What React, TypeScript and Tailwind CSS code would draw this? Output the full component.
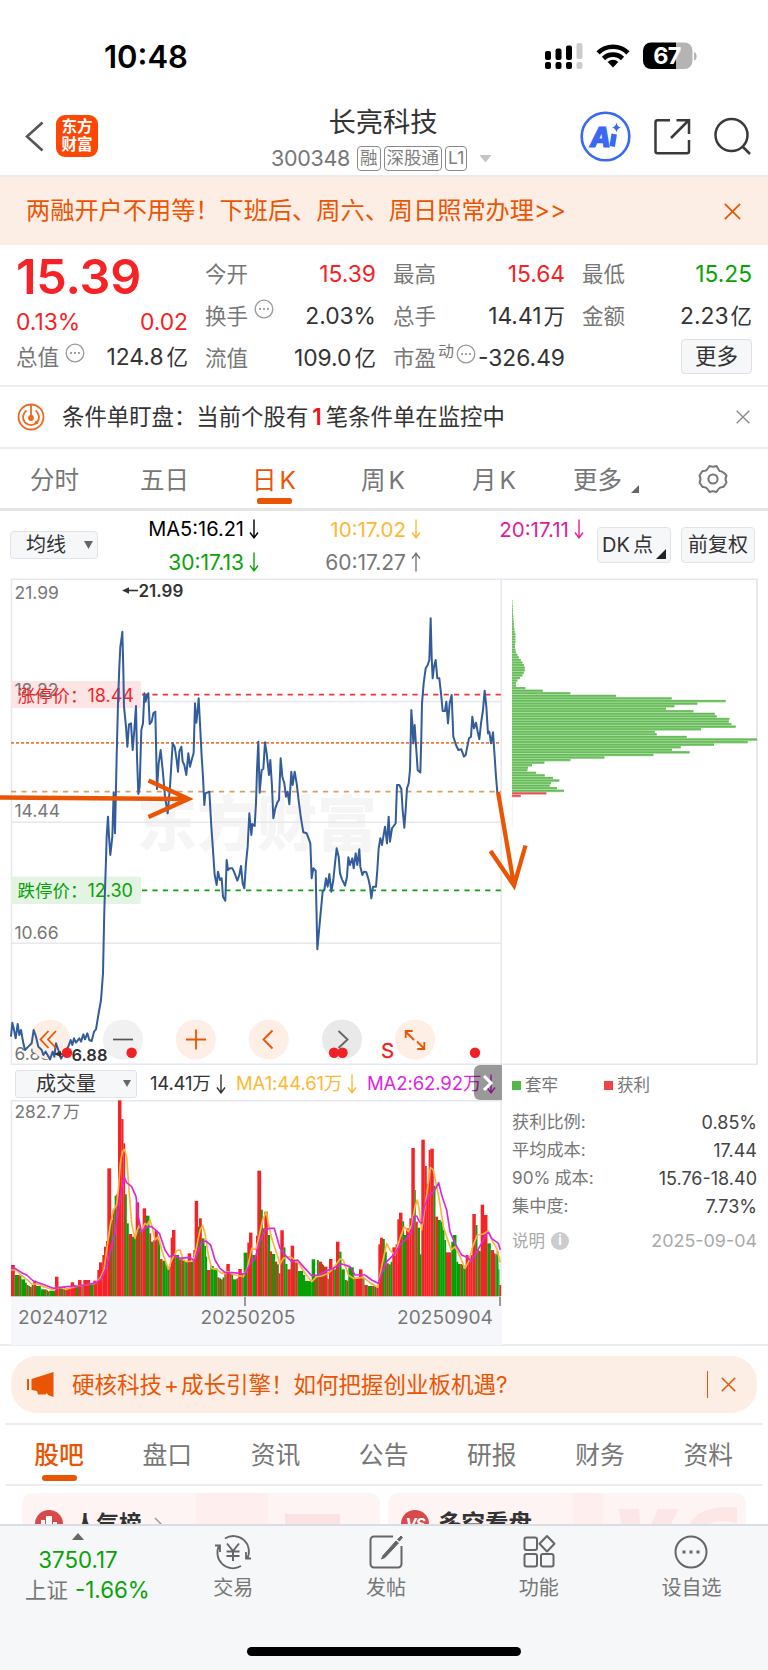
import type { ReactNode } from 'react';

// Series are stored in thirds of a pixel, relative to the left/top edge of each chart.
const pricePoints =
  '33,1400 37,1358 41,1375 47,1405 53,1362 58,1395 63,1380 70,1420 75,1440 85,1430 95,1420 101,1380 108,1400 115,1430 125,1440 130,1455 137,1445 150,1468 158,1445 163,1460 168,1420 175,1440 183,1466 195,1445 205,1430 212,1410 217,1425 222,1405 228,1418 238,1405 243,1415 250,1393 255,1408 262,1390 268,1410 275,1413 282,1385 288,1378 295,1335 303,1290 309,1210 313,1020 318,870 320,800 324,740 327,800 331,855 337,800 341,667 345,790 350,560 354,400 358,290 361,230 364,210 367,185 370,300 372,410 378,470 382,530 387,463 393,460 398,540 403,480 408,408 411,560 415,672 419,650 424,480 429,460 433,370 437,395 441,375 445,370 449,462 455,455 460,430 466,425 468,520 471,657 476,580 482,540 489,610 495,680 503,730 510,650 518,520 524,530 530,570 534,605 538,545 544,530 548,575 553,585 559,615 565,550 570,590 575,570 581,548 585,400 589,458 593,420 596,385 600,460 605,560 609,620 613,705 616,670 628,665 634,770 639,840 644,915 650,945 654,905 660,930 665,925 669,980 676,992 680,870 684,900 690,895 697,895 702,905 712,932 718,915 723,888 728,940 733,955 738,880 743,830 748,730 754,795 757,762 764,768 768,700 771,600 775,515 779,668 785,600 790,597 795,517 800,550 807,615 811,570 816,650 820,745 826,715 832,697 837,690 842,565 847,620 853,640 858,680 863,665 868,703 874,605 878,645 884,605 890,640 897,700 903,745 910,787 920,790 925,803 931,820 935,925 940,895 947,902 949,1000 952,1138 960,1050 968,965 973,960 978,925 983,950 988,912 994,965 1000,930 1005,880 1010,835 1016,860 1020,910 1026,928 1035,947 1041,920 1045,862 1050,885 1057,865 1061,895 1067,850 1072,885 1078,838 1081,890 1087,915 1092,905 1099,907 1106,930 1110,950 1114,985 1119,950 1128,950 1132,900 1136,835 1141,805 1146,825 1155,770 1161,820 1166,740 1170,815 1176,775 1181,768 1187,760 1191,645 1198,645 1204,657 1208,720 1213,773 1217,720 1221,655 1226,640 1230,600 1234,420 1237,460 1240,520 1244,465 1249,540 1253,600 1261,608 1264,500 1266,400 1271,340 1277,295 1283,285 1288,270 1292,145 1295,260 1298,325 1302,290 1307,270 1312,325 1318,325 1323,370 1328,423 1335,423 1339,395 1344,460 1349,400 1355,375 1360,500 1368,525 1375,540 1384,538 1392,560 1397,555 1402,530 1407,505 1413,500 1417,440 1422,475 1428,458 1433,485 1438,508 1443,460 1449,420 1454,362 1459,410 1464,490 1468,485 1473,520 1479,487 1484,560 1488,620 1492,668';

const volumeMa1 =
  '33,630 50,630 62,645 80,658 95,672 115,672 130,680 155,688 180,682 200,688 225,680 255,675 285,670 300,655 312,630 320,570 330,500 340,450 350,435 355,390 361,310 367,275 373,268 380,290 387,390 395,490 405,535 412,510 418,495 425,510 435,490 442,495 450,480 456,500 465,540 475,530 485,570 505,628 515,600 530,572 540,570 550,600 560,605 580,603 590,560 600,510 608,497 615,520 625,585 635,625 650,628 665,640 685,635 705,645 730,650 742,625 755,565 767,568 775,540 788,480 799,455 805,490 815,535 830,580 840,612 850,595 870,590 885,600 900,615 915,640 935,665 950,650 965,648 985,640 1000,625 1020,597 1030,600 1045,645 1060,655 1090,652 1110,668 1133,682 1145,620 1160,550 1170,570 1185,585 1200,535 1213,500 1225,515 1235,495 1245,440 1252,420 1258,450 1265,510 1275,440 1285,370 1291,322 1300,330 1308,370 1318,420 1330,500 1340,530 1353,570 1365,560 1380,590 1395,625 1408,600 1418,560 1432,525 1450,522 1465,513 1478,545 1490,565 1501,608';

const volumeMa2 =
  '33,622 45,625 65,638 80,645 100,663 120,670 160,685 200,680 240,678 290,668 305,655 320,620 330,580 345,520 355,450 365,385 373,352 380,368 395,380 408,410 415,470 424,515 440,500 455,500 478,520 495,570 508,590 520,585 540,595 570,592 583,603 595,570 605,548 617,543 632,555 645,600 660,625 675,637 700,638 735,642 750,612 765,595 780,545 795,510 810,505 823,505 830,530 840,565 860,590 875,605 893,600 910,620 935,647 955,645 980,632 1000,625 1025,612 1050,620 1065,645 1095,645 1115,660 1135,670 1145,640 1160,605 1185,580 1200,555 1220,535 1235,515 1242,470 1250,468 1258,485 1265,490 1273,440 1285,410 1300,395 1310,380 1316,368 1325,405 1340,450 1350,515 1365,550 1385,585 1400,592 1415,603 1430,575 1445,550 1460,520 1466,518 1475,535 1495,550 1501,570';

// x, top, colour: r = up, g = down, m = alternating days
const volumeRuns =
  '33 615 r,44 645 g,54 645 m,64 658 g,75 668 g,80 675 m,100 662 r,108 678 g,122 688 g,135 688 m,148 692 g,165 650 r,175 680 m,196 685 r,212 667 r,222 675 m,234 660 r,244 672 m,250 660 r,270 672 g,280 662 r,292 630 r,297 607 r,307 585 r,312 560 r,318 543 r,322 325 r,333 480 g,338 450 r,344 407 g,349 402 r,354 121 r,364 177 r,370 250 r,375 403 g,380 490 g,386 522 r,396 530 g,407 427 r,417 495 g,422 515 r,428 445 r,438 467 g,448 520 r,453 545 g,460 540 r,464 512 r,473 540 g,480 597 r,487 602 g,497 615 g,503 628 g,508 620 r,512 533 r,516 510 r,526 585 g,537 598 r,545 590 g,549 600 m,557 605 g,563 580 r,573 603 g,580 570 r,584 423 r,594 500 g,597 475 r,605 535 g,613 558 g,618 590 g,621 630 r,631 618 g,641 625 g,652 652 m,668 652 g,673 640 m,679 612 r,689 640 m,699 658 g,710 655 r,715 627 r,725 640 m,731 578 g,742 548 r,747 518 r,757 585 g,768 527 r,772 332 r,783 449 g,788 505 r,793 455 r,803 525 g,810 574 r,816 582 g,825 605 r,831 613 g,836 640 r,841 511 r,851 562 g,856 612 g,862 628 r,872 557 r,882 605 m,887 605 r,893 633 g,909 645 g,915 663 g,935 598 g,945 650 r,951 600 g,956 605 r,966 612 m,972 620 r,982 655 m,987 597 r,997 625 m,1008 545 r,1018 575 g,1024 628 g,1034 660 g,1040 662 r,1045 622 g,1061 650 m,1066 655 r,1077 628 r,1087 650 m,1093 675 r,1103 678 g,1118 678 m,1135 553 r,1140 533 r,1149 537 g,1154 575 g,1160 610 m,1172 605 g,1177 562 r,1187 553 r,1192 478 r,1197 458 r,1207 484 g,1212 525 g,1218 505 r,1228 475 r,1234 264 r,1244 390 g,1247 485 r,1253 503 g,1260 583 g,1264 239 r,1274 318 r,1280 372 r,1286 270 r,1291 266 r,1301 377 g,1306 470 r,1314 480 g,1322 485 g,1328 510 g,1333 540 g,1338 577 r,1354 545 g,1359 525 g,1369 605 g,1374 612 g,1382 612 m,1390 625 g,1397 585 r,1405 590 r,1412 585 r,1417 462 r,1427 495 g,1432 570 m,1442 434 r,1452 465 r,1462 550 g,1472 570 r,1482 580 m,1490 573 g,1495 628 g,1498 675 r';

const chips = [
  1, 1, 2, 2, 3, 3, 4, 4, 5, 6, 6, 7, 8, 10, 10, 10, 10, 9, 9, 10, 12, 16, 20, 26, 31, 36, 38, 38, 35, 31, 24, 16, 12, 12,
  40, 92, 175, 312, 479, 641, 556, 487, 462, 544, 608, 614, 652, 650, 658, 671, 567, 428, 434, 524, 735, 707, 606, 506,
  480, 533, 424, 277, 175, 97, 60, 48, 46, 72, 98, 123, 142, 117, 113, 135, 156, 103, 26,
];

const VOLUME_BASE = 709;

const volumeBars = volumeRuns.split(',').flatMap((run, i, all) => {
  const [x, top, kind] = run.split(' ');
  const end = i + 1 < all.length ? Number(all[i + 1].split(' ')[0]) : 1503;
  const start = Number(x);
  if (kind !== 'm') return [{ x: start, w: end - start, y: Number(top), up: kind === 'r' }];
  const n = Math.max(2, Math.round((end - start) / 5.2));
  const w = (end - start) / n;
  return Array.from({ length: n }, (_, k) => ({ x: start + k * w, w, y: Number(top) + (k % 3) * 3, up: k % 2 === 0 }));
});

const quoteRows = [
  [
    { label: '今开', value: '15.39', color: 'text-[#f52226]' },
    { label: '最高', value: '15.64', color: 'text-[#f52226]' },
    { label: '最低', value: '15.25', color: 'text-[#09a209]' },
  ],
  [
    { label: '换手', value: '2.03%', color: 'text-[#333]', more: true },
    { label: '总手', value: '14.41', unit: '万', color: 'text-[#333]' },
    { label: '金额', value: '2.23', unit: '亿', color: 'text-[#333]' },
  ],
];

const infoTabs = ['股吧', '盘口', '资讯', '公告', '研报', '财务', '资料'];

const chipStats = [
  { label: '获利比例:', value: '0.85%' },
  { label: '平均成本:', value: '17.44' },
  { prefix: '90%', label: '成本:', value: '15.76-18.40' },
  { label: '集中度:', value: '7.73%' },
];

function Cross({ className }: { className: string }) {
  return (
    <svg className={className} viewBox="0 0 16 16" fill="none" stroke="currentColor" strokeWidth="1.6">
      <path d="M0.8 0.8 15.2 15.2M15.2 0.8 0.8 15.2" />
    </svg>
  );
}

function Dots() {
  return (
    <svg className="h-[20px] w-[20px] shrink-0 text-[#999]" viewBox="0 0 20 20" fill="none" stroke="currentColor" strokeWidth="1.3">
      <circle cx="10" cy="10" r="8.8" />
      <path d="M5.2 10h1.8M9.1 10h1.8M13 10h1.8" strokeWidth="1.8" />
    </svg>
  );
}

function Arrow({ up }: { up?: boolean }) {
  return (
    <svg className="ml-[5px] h-[20px] w-[10px]" viewBox="0 0 10 20" fill="none" stroke="currentColor" strokeWidth="1.4">
      <path d={up ? 'M5 19.5V1.5M1 6.5 5 1.2 9 6.5' : 'M5 .5v18M1 13.5l4 5.3 4-5.3'} />
    </svg>
  );
}

function StatusBar() {
  return (
    <div className="flex h-[100px] shrink-0 items-start">
      <span className="ml-[104px] mt-[39px] w-[90px] text-[31px] font-semibold leading-[36px] text-black">10:48</span>
      <svg className="ml-[350px] mt-[42px] h-[28px] w-[154px]" viewBox="544 42 154 28">
        <g fill="#000">
          <rect x="545" y="51" width="6" height="9" rx="2" />
          <rect x="555.5" y="48.500" width="6" height="11.500" rx="2" />
          <rect x="566" y="45.500" width="6" height="14.500" rx="2" />
          <rect x="545" y="62" width="6" height="7" rx="2" />
          <rect x="555.5" y="62" width="6" height="7" rx="2" />
          <rect x="566" y="62" width="6" height="7" rx="2" />
        </g>
        <g fill="#ccc">
          <rect x="576.5" y="43" width="6" height="16" rx="2" />
          <rect x="576.5" y="62" width="6" height="7" rx="2" />
        </g>
        <g fill="none" stroke="#000" strokeWidth="4.600">
          <path d="M598 52.800A21.500 21.500 0 0 1 628 52.800" />
          <path d="M603.500 58.500A13.700 13.700 0 0 1 622.500 58.500" />
        </g>
        <path d="M613 67.500 607.700 62A7.500 7.500 0 0 1 618.300 62Z" fill="#000" />
        <path d="M651 42.500h25v26.500h-25a8 8 0 0 1-8-8v-10.500a8 8 0 0 1 8-8z" fill="#000" />
        <path d="M676 42.500h8.500a8 8 0 0 1 8 8v10.500a8 8 0 0 1-8 8H676z" fill="#b4b4b4" />
        <path d="M694 52c3.500 1 3.500 7.500 0 8.500z" fill="#b4b4b4" />
        <text x="667" y="64.300" textAnchor="middle" fill="#fff" fontSize="23.500" fontWeight="700" letterSpacing="-0.8">
          67
        </text>
      </svg>
    </div>
  );
}

function Tag({ children }: { children: ReactNode }) {
  return (
    <span className="flex h-[25px] items-center rounded-[4px] border-[1.5px] border-[#8a8a8a] px-[2px] text-[17.5px] text-[#808080]">
      {children}
    </span>
  );
}

function Header() {
  return (
    <header className="flex h-[75px] shrink-0 items-start">
      <svg className="ml-[24px] mt-[21px] h-[31px] w-[21px]" viewBox="0 0 21 31" fill="none" stroke="#555" strokeWidth="2.600">
        <path d="M18.500 1.500 3 15.500l15.500 14" />
      </svg>
      <div className="ml-[11px] mt-[15px] h-[42px] w-[42px] rounded-[9px] bg-[#fd4705] pt-[3px] text-center text-[15.500px] font-bold leading-[18px] text-white">
        东方
        <br />
        财富
      </div>
      <div className="ml-[152px] flex w-[254px] flex-col items-center pt-[5px]">
        <h1 className="ml-[12px] text-[27.300px] leading-[36px] text-[#333]">长亮科技</h1>
        <div className="mt-[5px] flex w-full items-center gap-[3px] pl-[21px]">
          <span className="mr-[4px] text-[21.500px] leading-[25px] tracking-[-0.3px] text-[#777]">300348</span>
          <Tag>融</Tag>
          <Tag>深股通</Tag>
          <Tag>L1</Tag>
        </div>
      </div>
      <svg className="mt-[54px] -ml-[25px] h-[9px] w-[13px]" viewBox="0 0 13 9">
        <path d="M.5 1h12L6.500 8.500z" fill="#c4c4c4" />
      </svg>
      <svg className="ml-[87px] mt-[10px] h-[54px] w-[176px]" viewBox="579 110 176 54" fill="none">
        <circle cx="605.500" cy="136.500" r="23.800" stroke="#3a68f4" strokeWidth="2.600" />
        <text x="590" y="147" fill="#3a68f4" stroke="#3a68f4" strokeWidth="1.200" fontSize="27" fontWeight="800" fontStyle="italic" textLength="18">
          A
        </text>
        <path d="m614.200 134-2 12.500" stroke="#3a68f4" strokeWidth="5.500" />
        <path d="M616.500 122.500q.7 4.300 4.500 5-3.800.8-4.500 5-.8-4.200-4.500-5 3.700-.7 4.500-5z" fill="#3a68f4" />
        <g stroke="#3a3a3a" strokeWidth="2.500">
          <path d="M670 120.200h-12.500a2 2 0 0 0-2 2v29a2 2 0 0 0 2 2h29.500a2 2 0 0 0 2-2V140M689 134v-13.800h-12.500M688.500 120.500l-17.500 17.500" />
          <circle cx="731.500" cy="135" r="16" />
          <path d="m742.500 146.500 7.500 7.500" />
        </g>
      </svg>
    </header>
  );
}

function Quote() {
  return (
    <section className="flex h-[142px] shrink-0 border-b-2 border-[#ebedf0] pl-[16px] pr-[15px] text-[21.500px]">
      <div className="w-[172px]">
        <div className="mt-[8px] h-[48px] text-[48.500px] font-semibold leading-[48px] tracking-[-0.2px] text-[#f52226]">15.39</div>
        <div className="mt-[1px] flex h-[40px] items-center justify-between text-[22.800px] text-[#f52226]">
          <span>0.13%</span>
          <span>0.02</span>
        </div>
        <div className="mt-[-5px] flex h-[40px] items-center text-[#333]">
          <span className="mr-[6px] text-[#777]">总值</span>
          <span className="-mt-[8px]">
            <Dots />
          </span>
          <span className="ml-auto text-[22.800px]">124.8</span>
          <span className="ml-[3px]">亿</span>
        </div>
      </div>
      <div className="ml-[17px] flex-1 pt-[8px]">
        {quoteRows.map((row, i) => (
          <div key={i} className="grid h-[42px] grid-cols-[171px_172px_170px] items-center gap-x-[17px]">
            {row.map((q) => (
              <div key={q.label} className="flex items-center">
                <span className="flex text-[#777]">
                  {q.label}
                  {q.more && (
                    <span className="-mt-[1px] ml-[6px]">
                      <Dots />
                    </span>
                  )}
                </span>
                <span className={`ml-auto text-[22.800px] ${q.color}`}>{q.value}</span>
                {q.unit && <span className="ml-[2px] text-[#333]">{q.unit}</span>}
              </div>
            ))}
          </div>
        ))}
        <div className="grid h-[42px] grid-cols-[171px_172px_170px] items-center gap-x-[17px] text-[#333]">
          <div className="flex items-center">
            <span className="text-[#777]">流值</span>
            <span className="ml-auto text-[22.800px]">109.0</span>
            <span className="ml-[3px]">亿</span>
          </div>
          <div className="flex items-center">
            <span className="text-[#777]">市盈</span>
            <span className="-mt-[14px] ml-[2px] text-[16px] text-[#777]">动</span>
            <span className="-mt-[9px] ml-[2px]">
              <Dots />
            </span>
            <span className="ml-auto text-[22.800px]">-326.49</span>
          </div>
          <button className="ml-auto h-[35px] w-[71px] -translate-y-[2px] rounded-[4px] border-[1.5px] border-[#dde1e6] bg-[#f6f7f9] leading-[30px]">更多</button>
        </div>
      </div>
    </section>
  );
}

function PeriodTabs() {
  return (
    <nav className="flex h-[62px] shrink-0 items-center border-b-[3px] border-[#e4e4e4] pt-[3px] text-[24.500px] text-[#777]">
      <span className="ml-[30px] w-[110px]">分时</span>
      <span className="w-[112px]">五日</span>
      <span className="relative flex w-[109px] gap-[3px] text-[#ea5504]">
        日<span>K</span>
        <i className="absolute -bottom-[6px] left-[5px] h-[6px] w-[35px] rounded-[2px] bg-[#ea5504]" />
      </span>
      <span className="flex w-[111px] gap-[3px]">周<span>K</span></span>
      <span className="flex w-[101px] gap-[3px]">月<span>K</span></span>
      <span>更多</span>
      <svg className="ml-[9px] mt-[17px] h-[8px] w-[8px]" viewBox="0 0 8 8">
        <path d="M8 0v8H0z" fill="#666" />
      </svg>
      <svg className="ml-[59px] h-[30px] w-[30px] -translate-y-px" viewBox="0 0 30 30" fill="none" stroke="#777" strokeWidth="2" strokeLinejoin="round">
        <path d="M11.500 2Q15 3.400 18.500 2L21.500 7Q24 7 26.600 9.500L28.500 11.500Q26.500 15 28.500 18.500L25.500 23Q22 22.500 20.500 25L18.500 28Q15 26.600 11.500 28L9.500 25Q8 22.500 4.500 23L1.500 18.500Q3.500 15 1.500 11.500L4.500 7Q8 7.500 9.500 5z" />
        <circle cx="15" cy="15" r="4.600" />
      </svg>
    </nav>
  );
}

function MaBar() {
  return (
    <div className="flex h-[59px] shrink-0 items-start text-[20px] text-[#333]">
      <button className="ml-[10px] mt-[20px] flex h-[28px] w-[88px] items-center justify-between rounded-[4px] border-[1.5px] border-[#e0e3e8] bg-[#f6f7f9] pl-[15px] pr-[4px] leading-none">
        均线
        <svg className="h-[8px] w-[9px]" viewBox="0 0 9 8">
          <path d="M0 0h9L4.500 8z" fill="#666" />
        </svg>
      </button>
      <div className="mt-[1.500px] grid w-[488px] grid-cols-[161px_162px_163px] text-[20.600px] leading-[33px]">
        <span className="flex items-center justify-end text-[20px] text-black">MA5:16.21<Arrow /></span>
        <span className="flex items-center justify-end text-[#fdb835]">10:17.02<Arrow /></span>
        <span className="flex items-center justify-end text-[#e0209a]">20:17.11<Arrow /></span>
        <span className="flex items-center justify-end text-[21px] text-[#09a209]">30:17.13<Arrow /></span>
        <span className="flex items-center justify-end text-[21px] text-[#777]">60:17.27<Arrow up /></span>
      </div>
      <button className="relative ml-[11px] mt-[16px] h-[36px] w-[74px] rounded-[4px] border-[1.5px] border-[#e0e3e8] bg-[#f6f7f9] pl-[4px] text-left leading-[32px]">
        DK<span className="ml-[3px]">点</span>
        <svg className="absolute bottom-[3px] right-[4px] h-[10px] w-[10px]" viewBox="0 0 10 10">
          <path d="M10 0v10H0z" fill="#222" />
        </svg>
      </button>
      <button className="ml-[10px] mt-[16px] h-[36px] w-[74px] rounded-[4px] border-[1.5px] border-[#e0e3e8] bg-[#f6f7f9] leading-[32px]">前复权</button>
    </div>
  );
}

function PriceChart() {
  return (
    <svg className="block h-[495px] w-[768px] shrink-0" viewBox="0 570 768 495" fill="none">
      <text x="137" y="846" fontSize="60" fontWeight="900" fill="#f5f5f5">
        东方财富
      </text>
      <g stroke="#e6e7ef" strokeWidth="1.500">
        <path d="M11 579.300H757.500M11.500 579v487M501.300 579v487M11 701.500h490M11 822.300h490M11 943.300h490M11 1064.300h746" />
        <path d="M757 579v487" strokeWidth="2" />
      </g>

      {/* limit bands */}
      <rect x="11" y="681" width="130" height="27" rx="2" fill="#fde4e5" />
      <rect x="11" y="876.500" width="130" height="27.500" rx="2" fill="#e3f4e3" />
      <g fill="#777" fontSize="17.500">
        <text x="14.500" y="598.500">21.99</text>
        <text x="14.500" y="695.500">18.22</text>
        <text x="14.500" y="816.500">14.44</text>
        <text x="14.500" y="938.500">10.66</text>
        <text x="14.500" y="1059.500">6.88</text>
      </g>
      <g fontSize="17.500">
        <text x="17.500" y="701.500" fill="#f52226">涨停价：</text>
        <text x="87.500" y="701.500" fill="#f52226" fontSize="18">18.44</text>
        <text x="17.500" y="897" fill="#09a209">跌停价：</text>
        <text x="87.500" y="897" fill="#09a209" fontSize="18">12.30</text>
      </g>
      <g strokeWidth="1.800">
        <path d="M142 694.700h359" stroke="#f5333a" strokeDasharray="5.200 5.200" />
        <path d="M11 742.800h490" stroke="#ec7a3c" strokeDasharray="3 2" />
        <path d="M11 791.700h490" stroke="#d9a062" strokeDasharray="5.200 5.200" />
        <path d="M142 890.300h359" stroke="#0ca40c" strokeDasharray="5.200 5.200" />
      </g>

      {/* toolbar circles */}
      <g fill="#fdeee6">
        <circle cx="50" cy="1039.500" r="20" />
        <circle cx="195.800" cy="1039.500" r="20" />
        <circle cx="268.700" cy="1039.500" r="20" />
        <circle cx="415" cy="1039.500" r="20" />
      </g>
      <circle cx="123" cy="1039.500" r="20" fill="#f1f1f1" />
      <circle cx="342" cy="1039.500" r="20" fill="#e9e9e9" />

      <g transform="translate(0 570) scale(.33333)">
        <polyline points={pricePoints} stroke="#335c9b" strokeWidth="6" strokeLinejoin="round" />
      </g>

      <text x="138.500" y="596.500" fontSize="17" fontWeight="600" fill="#333">21.99</text>
      <path d="M128 590.500h10" stroke="#333" strokeWidth="1.600" />
      <path d="m122 590.500 7-3.300v6.600z" fill="#333" />

      <g stroke="#ea5504" strokeWidth="1.800">
        <path d="m48.500 1031-8 8.500 8 8.500M56 1031l-8 8.500 8 8.500" />
        <path d="M186 1039.500h20M196 1029.500v20" />
        <path d="m272.500 1030.500-9 9 9 9" />
        <path d="m414 1040-8.500-8.500M405.700 1038v-7h7M417 1041.500l7.500 7.500M424.300 1042v7h-7" />
      </g>
      <path d="M113 1039.500h20" stroke="#555" strokeWidth="1.700" />
      <path d="m338.500 1031 9 8.500-9 8.500" stroke="#666" strokeWidth="1.900" />
      <path d="m54 1054 7-3.300v6.600z" fill="#333" />
      <path d="M60 1054h5" stroke="#333" strokeWidth="1.600" />
      <g fill="#f12024">
        <circle cx="67" cy="1052.700" r="5.200" />
        <circle cx="131.600" cy="1052.700" r="5.200" />
        <circle cx="334" cy="1052.700" r="5.200" />
        <circle cx="342.500" cy="1052.700" r="5.200" />
        <circle cx="475" cy="1052.700" r="5.200" />
        <text x="381" y="1058" fontSize="20.500" stroke="#f12024" strokeWidth=".3">S</text>
      </g>
      <text x="71.500" y="1060.500" fontSize="16.500" fontWeight="600" fill="#333">6.88</text>

      {/* cost distribution */}
      {chips.map((w, i) => (
        <rect
          key={i}
          x="512"
          y={599.8 + i * 2.565}
          width={w / 3}
          height="2.565"
          fill={i > 74 ? '#f39494' : '#90d385'}
        />
      ))}
      {chips.map((w, i) => (
        <rect
          key={i}
          x="512"
          y={600.1 + i * 2.565}
          width={w / 3}
          height="1.500"
          fill={i > 74 ? '#e75254' : '#66bb58'}
        />
      ))}
      <path d="M512.300 797v30" stroke="#fbe9e9" strokeWidth=".7" />

      <g stroke="#ea5504" strokeWidth="4.300">
        <path d="M0 797.500 187 799M148.500 780.500l40 18.500-40 18" />
        <path d="m498 792 16 93M490.500 851l23.500 34.500 11.500-40" />
      </g>
    </svg>
  );
}

function VolumePanel() {
  return (
    <div className="w-[502px]">
      <div className="relative flex h-[35px] items-center pt-[2px] text-[18.500px] text-[#333]">
        <button className="ml-[15px] flex h-[28px] w-[122px] items-center rounded-[3px] border-[1.5px] border-[#e0e3e8] bg-[#f6f7f9] pl-[20px] text-[20px] leading-none">
          成交量
          <svg className="ml-auto mr-[5px] h-[7px] w-[8px]" viewBox="0 0 8 7">
            <path d="M0 0h8L4 7z" fill="#666" />
          </svg>
        </button>
        <span className="ml-[13px] flex w-[86px] items-center whitespace-nowrap tracking-[-0.2px]">14.41万<Arrow /></span>
        <span className="flex w-[131px] items-center whitespace-nowrap tracking-[-0.1px] text-[#fdb835]">MA1:44.61万<Arrow /></span>
        <span className="flex items-center whitespace-nowrap tracking-[-0.1px] text-[#dc28dc]">MA2:62.92万<Arrow /></span>
        <span className="absolute left-[474px] top-0 flex h-[35px] w-[28px] items-center justify-center rounded-l-[6px] bg-black/40">
          <svg className="h-[18px] w-[12px]" viewBox="0 0 12 18" fill="none" stroke="#fff" strokeWidth="3">
            <path d="m2 2 7 7-7 7" />
          </svg>
        </span>
      </div>
      <svg className="block h-[197px] w-[502px]" viewBox="0 1100 502 197" fill="none">
        <path d="M11 1100.700h490M11.500 1100v196M501 1100v196" stroke="#e6e7ef" strokeWidth="1.500" />
        <g transform="translate(0 1060) scale(.33333)">
          {volumeBars.map((b, i) => (
            <rect key={i} x={b.x} y={b.y} width={b.w + 0.4} height={VOLUME_BASE - b.y} fill={b.up ? '#f52326' : '#04a004'} />
          ))}
          <polyline points={volumeMa1} stroke="#fdb43c" strokeWidth="5" strokeLinejoin="round" />
          <polyline points={volumeMa2} stroke="#dc28dc" strokeWidth="5" strokeLinejoin="round" />
        </g>
        <text x="14.500" y="1117.500" fontSize="17.300" fill="#777">282.7</text>
        <text x="63" y="1117.500" fontSize="17" fill="#777">万</text>
      </svg>
      <div className="relative ml-[11px] flex h-[48px] items-start justify-between bg-[#f6f7fb] pl-[7px] pr-[9px] pt-[7px] text-[19.100px] leading-[26px] tracking-[0.1px] text-[#777]">
        <span>20240712</span>
        <span className="mr-[9px]">20250205</span>
        <span>20250904</span>
        <i className="absolute left-[233px] top-0 h-[9px] w-[2px] bg-[#999]" />
        <i className="absolute right-px top-0 h-[9px] w-[2px] bg-[#999]" />
      </div>
    </div>
  );
}

function ChipPanel() {
  return (
    <div className="ml-[10px] w-[245px] text-[17.200px] text-[#777]">
      <div className="flex h-[40px] items-center text-[16.500px]">
        <i className="mr-[4px] h-[9px] w-[9px] bg-[#55b748]" />
        <span className="w-[79px]">套牢</span>
        <i className="mr-[4px] h-[9px] w-[9px] bg-[#ec4448]" />
        获利
      </div>
      <div className="pt-[3px]">
        {chipStats.map((s) => (
          <div key={s.label} className="flex h-[28px] items-center">
            {s.prefix && <span className="mr-[4px]">{s.prefix}</span>}
            <span>{s.label}</span>
            <span className="ml-auto text-[18px] text-[#444]">{s.value}</span>
          </div>
        ))}
      </div>
      <div className="mt-[7px] flex h-[28px] items-center text-[16.500px] text-[#aaa]">
        说明
        <span className="ml-[6px] flex h-[18px] w-[18px] items-center justify-center rounded-full bg-[#ccc] text-[13px] font-bold text-white">i</span>
        <span className="ml-auto text-[17.900px]">2025-09-04</span>
      </div>
    </div>
  );
}

function Cards() {
  return (
    <div className="flex h-[38px] shrink-0 gap-[8px] overflow-hidden pl-[22px] pt-[7px] text-[22.500px] font-bold text-[#333]">
      <div className="flex h-[60px] w-[358px] rounded-[10px] bg-[#fef4f3]">
        <span className="ml-[13px] mt-[17px] flex h-[28px] w-[28px] shrink-0 items-end justify-center gap-px rounded-full bg-[#d9484a] pb-[11px]">
          <i className="h-[7px] w-[4px] bg-white" />
          <i className="h-[11px] w-[6px] bg-white" />
          <i className="h-[5px] w-[4px] bg-white" />
        </span>
        <span className="ml-[11px] mt-[17px] whitespace-nowrap leading-[28px]">人气榜</span>
        <svg className="ml-[12px] mt-[24px] h-[14px] w-[8px]" viewBox="0 0 8 14" fill="none" stroke="#999" strokeWidth="1.500">
          <path d="m1 1 6 6-6 6" />
        </svg>
        <i className="ml-[34px] h-[60px] w-[72px] bg-[#feefee]" />
        <i className="ml-[17px] mt-[21px] h-[30px] w-[55px] bg-[#fce2e2]" />
      </div>
      <div className="flex h-[60px] w-[358px] overflow-hidden rounded-[10px] bg-[#fef4f3]">
        <span className="ml-[13px] mt-[17px] flex h-[28px] w-[28px] shrink-0 items-center justify-center rounded-full bg-[#d9484a] text-[15px] italic tracking-[-1px] text-white">
          VS
        </span>
        <span className="ml-[9px] mt-[17px] shrink-0 whitespace-nowrap text-[23.500px] leading-[28px]">多空看盘</span>
        <i className="ml-[41px] h-[60px] w-[30px] shrink-0 bg-[#feefee]" />
        {/* faded "VS" artwork, only its upper edge shows */}
        <svg className="ml-[16px] h-[60px] w-[124px] shrink-0" viewBox="0 0 124 60" fill="#fce6e6">
          <path d="M0 16h20l3 34 16-34h21L36 60H6z" />
          <path d="M70 34C74 20 88 13 118 14v16c-20-4-30 0-29 4 1 5 24 4 25 26H66z" />
        </svg>
      </div>
    </div>
  );
}

function BottomItem({ label, children }: { label: string; children: ReactNode }) {
  return (
    <div className="flex w-[152.700px] flex-col items-center text-[20px] text-[#777]">
      <svg className="mt-[8px] h-[36px] w-[36px]" viewBox="0 0 36 36" fill="none" stroke="#666" strokeWidth="2">
        {children}
      </svg>
      <span className="mt-[4px] leading-[28px]">{label}</span>
    </div>
  );
}

function BottomBar() {
  return (
    <footer className="relative flex h-[146px] shrink-0 border-t-2 border-[#d9dce2] bg-[#f6f7f9]">
      <div className="ml-[15px] w-[142px] text-[22.300px] text-[#09a209]">
        <svg className="ml-[57px] mt-[7px] h-[7px] w-[12px]" viewBox="0 0 12 7">
          <path d="M6 0l6 7H0z" fill="#666" />
        </svg>
        <div className="-ml-[3px] mt-[5px] w-[132px] text-center leading-[30px]">3750.17</div>
        <div className="ml-[10px] flex whitespace-nowrap leading-[30px]">
          <span className="mr-[7px] text-[21.500px] text-[#777]">上证</span>-1.66%
        </div>
      </div>
      <BottomItem label="交易">
        <path d="M10 4.500A15.500 15.500 0 0 1 32 25M26 32A15.500 15.500 0 0 1 4.500 11M0 11.500h5V18M36 24.500h-5V18" strokeWidth="1.800" />
        <path d="m12 9.500 6 7.500 6-7.500M11.500 17.500h13M11.500 22h13M18 17v10" />
      </BottomItem>
      <BottomItem label="发帖">
        <path d="M25 2.500H6a3.500 3.500 0 0 0-3.500 3.500v24A3.500 3.500 0 0 0 6 33.500h24a3.500 3.500 0 0 0 3.500-3.500V12" />
        <path d="M29.500 5.500 33 2l1.500 1.500-3 3.500zM28 7l2.500 2L17 23.500 13.500 25l1.500-3.500z" fill="#666" strokeWidth="1" />
      </BottomItem>
      <BottomItem label="功能">
        <rect x="3.500" y="3.500" width="12.500" height="12.500" rx="2" />
        <rect x="3.500" y="20" width="12.500" height="12.500" rx="2" />
        <rect x="20" y="20" width="12.500" height="12.500" rx="2" />
        <path d="m26 2 7.500 7.800L26 17.500l-7.500-7.700z" strokeLinejoin="round" />
      </BottomItem>
      <BottomItem label="设自选">
        <circle cx="18" cy="18" r="15.500" />
        <path d="M9.500 18h3M16.500 18h3M23.500 18h3" strokeWidth="3" />
      </BottomItem>
      <div className="absolute bottom-[14px] left-[247px] h-[9px] w-[274px] rounded-full bg-black" />
    </footer>
  );
}

export default function App() {
  return (
    <div className="flex h-[1670px] w-[768px] flex-col overflow-hidden bg-white font-[Inter,'Noto_Sans_CJK_SC',sans-serif]">
      <StatusBar />
      <Header />
      <div className="flex h-[70px] shrink-0 items-center justify-between border-t-2 border-[#ecebec] bg-[#fdeee5] pl-[26px] pr-[27px] text-[24.200px] text-[#ea5504]">
        <span className="whitespace-nowrap">两融开户不用等！下班后、周六、周日照常办理&gt;&gt;</span>
        <Cross className="h-[17px] w-[17px]" />
      </div>
      <Quote />
      <div className="flex h-[62px] shrink-0 items-center border-b-2 border-[#ebedf0] pl-[17px] pr-[18px] text-[22.400px] text-[#333]">
        <svg className="mr-[17px] h-[28px] w-[28px]" viewBox="0 0 28 28" fill="none" stroke="#ec6a20" strokeWidth="1.800">
          <circle cx="14" cy="14" r="12.500" />
          <path d="M9.500 7.500A8 8 0 1 0 18.500 7.500M14 1.500V15" />
          <circle cx="14" cy="15" r="2" fill="#ec6a20" />
          <circle cx="19.500" cy="19.500" r="1.800" fill="#ec6a20" stroke="none" />
        </svg>
        <span className="whitespace-nowrap">条件单盯盘：当前个股有<b className="mx-[4px] font-semibold text-[#f50f14]">1</b>笔条件单在监控中</span>
        <Cross className="ml-auto h-[14px] w-[14px] text-[#888]" />
      </div>
      <PeriodTabs />
      <MaBar />
      <PriceChart />
      <div className="flex h-[281px] shrink-0 border-b-2 border-[#ebedf0]">
        <VolumePanel />
        <ChipPanel />
      </div>
      <div className="mx-[11px] mt-[10px] flex h-[57px] shrink-0 items-center rounded-[26px] bg-[#fdeee5] pl-[16px] pr-[21px] text-[22.500px] text-[#ea5504]">
        <svg className="mr-[18px] h-[25px] w-[27px]" viewBox="0 0 27 25" fill="#ea5504">
          <path d="M0 7h2v11H0zM4.500 7 26.500 0v25l-5-1.800-2-2-1 1.300H11L10 19l-5.500-1z" />
        </svg>
        <span className="whitespace-nowrap">硬核科技<span className="mx-[2px]">+</span>成长引擎！如何把握创业板机遇?</span>
        <i className="ml-auto h-[27px] w-[1.500px] bg-[#ea5504]" />
        <Cross className="ml-[13px] h-[15px] w-[15px]" />
      </div>
      <nav className="mx-[5px] mt-[10px] flex h-[63px] shrink-0 items-center border-b-2 border-t-2 border-[#ebedf0] pt-[3px] text-[24.800px] text-[#777]">
        {infoTabs.map((tab, i) =>
          i === 0 ? (
            <span key={tab} className="relative w-[108.200px] text-center font-medium text-[#ea5504]">
              {tab}
              <i className="absolute -bottom-[6px] left-[37px] h-[6px] w-[35px] rounded-[3px] bg-[#ea5504]" />
            </span>
          ) : (
            <span key={tab} className="w-[108.200px] text-center">{tab}</span>
          ),
        )}
      </nav>
      <Cards />
      <BottomBar />
    </div>
  );
}
